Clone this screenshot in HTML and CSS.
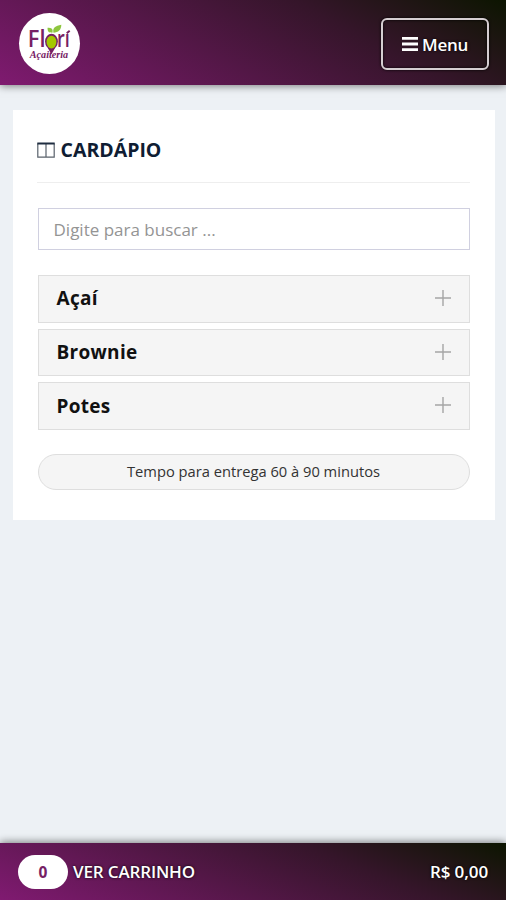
FILE: index.html
```html
<!DOCTYPE html>
<html lang="pt-BR">
<head>
<meta charset="utf-8">
<title>Flori Açaiteria</title>
<link rel="stylesheet" href="styles.css">
</head>
<body>
<header class="topbar">
  <svg class="logo" viewBox="0 0 64 64" role="img" aria-label="Flori Açaiteria">
    <circle cx="32" cy="32" r="31" fill="#fff"/>
    <text class="logo-name" x="10" y="36" textLength="18" lengthAdjust="spacingAndGlyphs">Fl</text>
    <text class="logo-name" x="39.500" y="36" textLength="13" lengthAdjust="spacingAndGlyphs">rı</text>
    <path d="M49.500 21.500l3-2.500" stroke="#762064" stroke-width="2"/>
    <path d="M30 36h8l-4 7z" fill="#762064"/>
    <ellipse cx="34" cy="30" rx="6.500" ry="8" fill="#762064"/>
    <ellipse cx="34" cy="30.500" rx="5" ry="6.500" fill="#a5c800"/>
    <path d="M36 21c-1-5 2-7 8-8 0 5-3 8-8 8zM35 21c-4 0-5-1-5-5 4 0 6 1 5 5z" fill="#8ec63f"/>
    <text class="logo-sub" x="12" y="47" textLength="39" lengthAdjust="spacingAndGlyphs">Açaiteria</text>
  </svg>
  <button class="menu" type="button">
    <svg width="16" height="14" viewBox="0 0 16 14"><path d="M0 0h16v2.800H0zM0 5.600h16v2.800H0zM0 11.200h16V14H0z" fill="#fff"/></svg>
    <span>Menu</span>
  </button>
</header>
<main class="card">
  <h1 class="title">
    <svg width="18" height="16" viewBox="0 0 18 16"><path d="M.8 1.500v13.700h16.400V1.500M9 2v13" fill="none" stroke="#59616b" stroke-width="1.200"/><path d="M.3 1.500h17.400" stroke="#1f2d40" stroke-width="2"/></svg>
    <span>CARDÁPIO</span>
  </h1>
  <input class="search" type="text" placeholder="Digite para buscar ...">
  <ul class="list">
    <li class="item"><span>Açaí</span><svg width="16" height="16" viewBox="0 0 16 16"><path d="M8 0v16M0 8h16"/></svg></li>
    <li class="item"><span>Brownie</span><svg width="16" height="16" viewBox="0 0 16 16"><path d="M8 0v16M0 8h16"/></svg></li>
    <li class="item"><span>Potes</span><svg width="16" height="16" viewBox="0 0 16 16"><path d="M8 0v16M0 8h16"/></svg></li>
  </ul>
  <p class="time"><span>Tempo para entrega 60 à 90 minutos</span></p>
</main>
<footer class="cart">
  <span class="count">0</span>
  <span class="cart-label">VER CARRINHO</span>
  <span class="total">R$ 0,00</span>
</footer>
</body>
</html>
```
FILE: styles.css
```css
* { box-sizing: border-box; }
body {
  margin: 0;
  height: 900px;
  display: flex;
  flex-direction: column;
  background: #edf1f5;
  font-family: "Open Sans", sans-serif;
  overflow: hidden;
}
.topbar {
  height: 85px;
  flex: none;
  display: flex;
  align-items: center;
  justify-content: space-between;
  padding: 1px 17px 0 18px;
  background: linear-gradient(28deg, #7f1a70 0%, #35152a 68%, #0c1500 100%);
  box-shadow: 0 1px 8px rgba(0, 0, 0, .5);
}
.logo { width: 63px; height: 63px; }
.logo-name { font: 600 24px "Open Sans", sans-serif; fill: #762064; }
.logo-sub { font: italic 700 9.5px "Liberation Serif", serif; fill: #762064; }
.menu {
  width: 108px;
  height: 52px;
  margin-top: 2px;
  padding: 0;
  display: flex;
  align-items: center;
  justify-content: center;
  gap: 4px;
  border: 2px solid #d5cdd1;
  border-radius: 6px;
  background: transparent;
  color: #fff;
  font: 600 17px "Open Sans", sans-serif;
  letter-spacing: -.3px;
  text-shadow: 0 0 3px #000;
  box-shadow: 0 0 3px #000, inset 0 0 3px #000;
}
.card {
  width: 482px;
  height: 410px;
  margin: 25px 0 0 12.5px;
  padding: 0 25px;
  flex: none;
  background: #fff;
}
.title {
  height: 73px;
  margin: 0 0 25px -1px;
  padding-top: 7px;
  display: flex;
  align-items: center;
  gap: 6px;
  border-bottom: 1px solid #eee;
  color: #0f1d33;
  font-size: 19.5px;
  font-weight: 700;
}
.search {
  display: block;
  width: 432px;
  height: 42px;
  margin: 0 0 25px;
  padding: 1px 15px 0;
  border: 1.5px solid #d0d0e0;
  border-radius: 0;
  background: #fff;
  color: #555;
  font: 17px "Open Sans", sans-serif;
}
.search::placeholder { color: #949494; }
.list {
  margin: 0 0 24px;
  padding: 0;
  display: grid;
  gap: 6px;
  list-style: none;
}
.item {
  height: 47.7px;
  padding: 0 18px 2px;
  display: flex;
  align-items: center;
  justify-content: space-between;
  border: 1.5px solid #dedede;
  background: #f5f5f5;
  color: #111;
  font-size: 19px;
  font-weight: 700;
  letter-spacing: .3px;
}
.item span { margin-top: 1px; }
.item svg { fill: none; stroke: #a5a5a5; stroke-width: 1.4; }
.time {
  height: 36px;
  margin: 0;
  padding-bottom: 2px;
  display: flex;
  align-items: center;
  justify-content: center;
  border: 1.5px solid #dedede;
  border-radius: 18px;
  background: #f5f5f5;
  color: #333;
  font-size: 14.7px;
}
.cart {
  height: 57px;
  flex: none;
  margin-top: auto;
  padding: 0 18px;
  display: flex;
  align-items: center;
  background: linear-gradient(22deg, #801a71 0%, #35152a 68%, #0c1500 100%);
  box-shadow: 0 -1px 8px rgba(0, 0, 0, .5);
  color: #fff;
  font-size: 17px;
  font-weight: 600;
  text-shadow: 0 0 3px #000;
}
.count {
  width: 50px;
  height: 34px;
  margin-right: 5px;
  border-radius: 17px;
  background: #fff;
  color: #762064;
  font-size: 15.5px;
  font-weight: 700;
  line-height: 35px;
  text-align: center;
  text-shadow: none;
}
.cart-label { letter-spacing: -.15px; }
.total { margin-left: auto; letter-spacing: -.1px; }
```
